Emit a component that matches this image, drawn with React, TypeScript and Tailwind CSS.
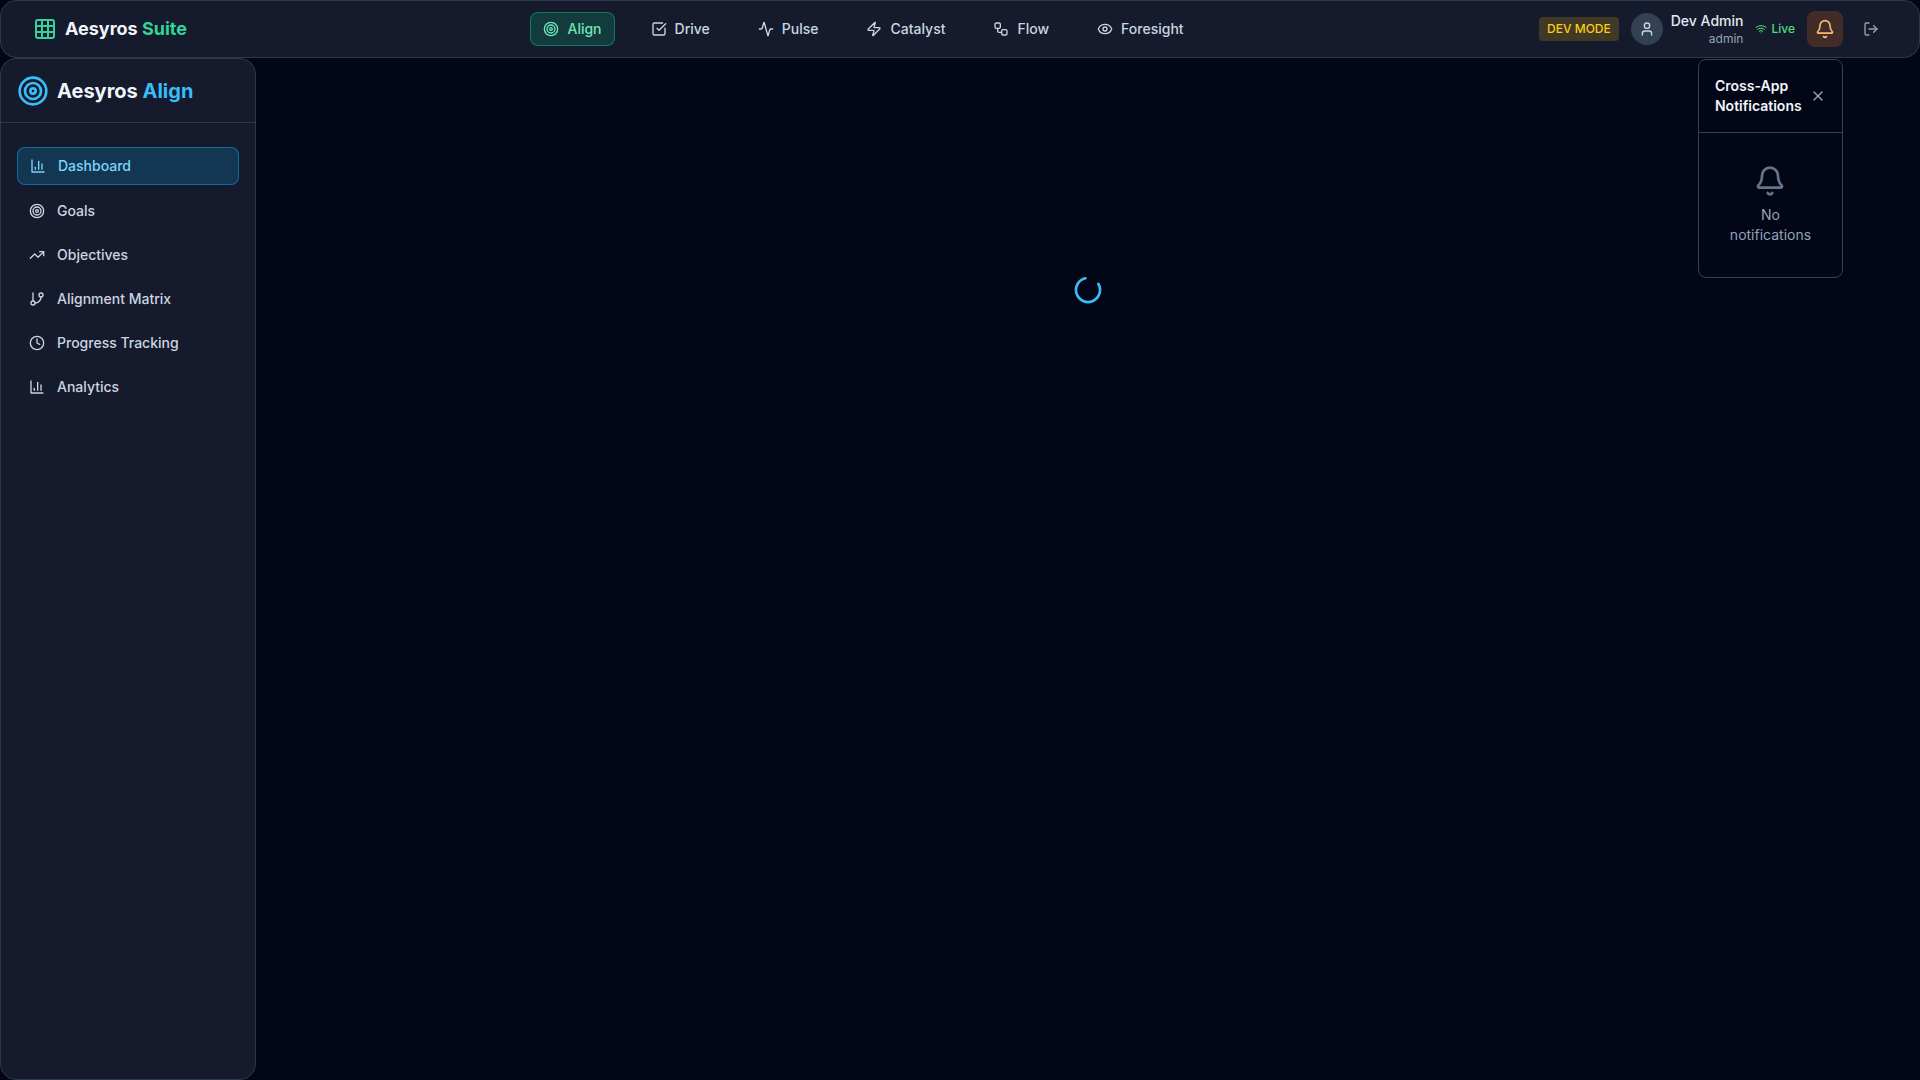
import React from "react";
import {
  Activity,
  Bell,
  Clock,
  Eye,
  GitBranch,
  Grid3x3,
  Loader2,
  LogOut,
  SquareCheckBig,
  Target,
  TrendingUp,
  User,
  Wifi,
  Workflow,
  X,
  Zap,
} from "lucide-react";

type IconType = React.ComponentType<{ className?: string }>;

function BarChart({ className }: { className?: string }) {
  return (
    <svg
      className={className}
      viewBox="0 0 24 24"
      fill="none"
      stroke="currentColor"
      strokeWidth="2"
      strokeLinecap="round"
      strokeLinejoin="round"
      aria-hidden="true"
    >
      <path d="M3 3v18h18" />
      <path d="M18 17V9" />
      <path d="M13 17V5" />
      <path d="M8 17v-3" />
    </svg>
  );
}

const apps: { label: string; icon: IconType; active?: boolean }[] = [
  { label: "Align", icon: Target, active: true },
  { label: "Drive", icon: SquareCheckBig },
  { label: "Pulse", icon: Activity },
  { label: "Catalyst", icon: Zap },
  { label: "Flow", icon: Workflow },
  { label: "Foresight", icon: Eye },
];

const sections: { label: string; icon: IconType; active?: boolean }[] = [
  { label: "Dashboard", icon: BarChart, active: true },
  { label: "Goals", icon: Target },
  { label: "Objectives", icon: TrendingUp },
  { label: "Alignment Matrix", icon: GitBranch },
  { label: "Progress Tracking", icon: Clock },
  { label: "Analytics", icon: BarChart },
];

function NotificationPanel() {
  return (
    <div className="absolute right-0 top-full z-10 mt-3 w-[145px] rounded-lg border border-[#334155] bg-[#020617]">
      <div className="flex items-center justify-between border-b border-[#334155] p-4">
        <h3 className="text-sm font-semibold text-[#f1f5f9]">Cross-App Notifications</h3>
        <button type="button" aria-label="Close notifications" className="shrink-0 text-[#94a3b8]">
          <X className="size-4" />
        </button>
      </div>
      <div className="flex flex-col items-center px-4 py-8 text-center text-sm text-[#94a3b8]">
        <Bell className="mb-2 size-8 text-[#64748b]" />
        <p>
          No
          <br />
          notifications
        </p>
      </div>
    </div>
  );
}

function TopBar() {
  return (
    <header className="flex items-center justify-between rounded-[16px] border border-[#2b394c] bg-[#151b2c] px-8 py-2.5">
      <a href="#suite" className="flex items-center gap-2">
        <Grid3x3 className="size-6 text-[#34d399]" />
        <span className="text-lg/7 font-bold text-[#f1f5f9]">
          Aesyros <span className="text-[#34d399]">Suite</span>
        </span>
      </a>
      <nav aria-label="Apps" className="flex items-center gap-6">
        {apps.map(({ label, icon: Icon, active }) => (
          <a
            key={label}
            href={"#" + label.toLowerCase()}
            className={
              active
                ? "flex items-center gap-2 rounded-lg border border-[#10b981]/50 bg-[#10b981]/20 px-3 py-1.5 text-sm font-medium text-[#6ee7b7]"
                : "flex items-center gap-2 rounded-lg px-3 py-1.5 text-sm font-medium text-[#cbd5e1]"
            }
          >
            <Icon className="size-4" />
            {label}
          </a>
        ))}
      </nav>
      <div className="flex items-center gap-3">
        <span className="rounded bg-[#eab308]/20 px-2 py-1 text-xs font-medium text-[#facc15]">DEV MODE</span>
        <div className="flex items-center gap-2">
          <div className="flex size-8 items-center justify-center rounded-full bg-[#334155] text-[#cbd5e1]">
            <User className="size-4" />
          </div>
          <div className="text-right">
            <p className="text-sm font-medium text-[#e2e8f0]">Dev Admin</p>
            <p className="text-xs text-[#94a3b8]">admin</p>
          </div>
        </div>
        <div className="flex items-center gap-1 text-xs font-medium text-[#4ade80]">
          <Wifi className="size-3" />
          Live
        </div>
        <div className="relative">
          <button
            type="button"
            aria-label="Notifications"
            className="flex size-9 items-center justify-center rounded-lg bg-[#f97316]/20 text-[#fdba74]"
          >
            <Bell className="size-5" />
          </button>
          <NotificationPanel />
        </div>
        <button type="button" aria-label="Log out" className="p-2 text-[#94a3b8]">
          <LogOut className="size-4" />
        </button>
      </div>
    </header>
  );
}

function Sidebar() {
  return (
    <aside className="w-64 shrink-0 rounded-[16px] border border-[#2b394c] bg-[#151b2c]">
      <div className="flex h-16 items-center gap-2 border-b border-[#2b394c] px-4">
        <Target className="size-8 text-[#38bdf8]" />
        <span className="text-xl font-bold text-[#f1f5f9]">
          Aesyros <span className="text-[#38bdf8]">Align</span>
        </span>
      </div>
      <nav aria-label="Sections" className="flex flex-col gap-2 px-4 py-6">
        {sections.map(({ label, icon: Icon, active }) => (
          <a
            key={label}
            href={"#" + label.toLowerCase().replace(" ", "-")}
            className={
              active
                ? "flex items-center gap-3 rounded-lg border border-[#0ea5e9]/50 bg-[#0ea5e9]/20 px-3 py-2 text-sm font-medium text-[#7dd3fc]"
                : "flex items-center gap-3 rounded-lg px-3 py-2 text-sm font-medium text-[#cbd5e1]"
            }
          >
            <Icon className="size-4" />
            {label}
          </a>
        ))}
      </nav>
    </aside>
  );
}

export default function App() {
  return (
    <div className="flex min-h-screen flex-col bg-[#020617] font-['Inter',sans-serif] text-[#f1f5f9]">
      <TopBar />
      <div className="flex grow">
        <Sidebar />
        <main className="flex grow items-start justify-center p-6">
          <div role="status" aria-label="Loading" className="flex h-104 items-center">
            <Loader2 className="size-8 -rotate-30 text-[#38bdf8]" />
          </div>
        </main>
      </div>
    </div>
  );
}
